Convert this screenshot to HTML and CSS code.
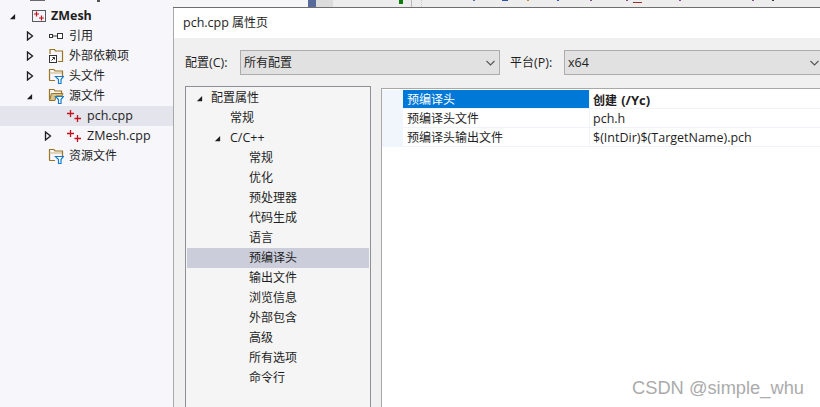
FILE: index.html
```html
<!DOCTYPE html>
<html lang="zh">
<head>
<meta charset="utf-8">
<title>pch.cpp 属性页</title>
<link rel="stylesheet" href="styles.css">
</head>
<body>
<svg class="defs" width="0" height="0" aria-hidden="true">
  <defs>
    <symbol id="open" viewBox="0 0 8 8"><path d="M7 1V7H1Z" fill="#1e1e1e"/></symbol>
    <symbol id="closed" viewBox="0 0 8 10"><path d="M1.500 1V9L6.500 5Z" fill="none" stroke="#1e1e1e" stroke-width="1.300"/></symbol>
    <symbol id="cpp" viewBox="0 0 16 16"><path d="M1 5.500H8M4.500 2V9M8.500 10.500H15M11.500 7V14" stroke="#c4101c" stroke-width="1.300" fill="none"/></symbol>
    <symbol id="filter" viewBox="0 0 16 16"><path d="M1.500 12.500V1.500H6L7 3H14.500V8M1.500 12.500H7" fill="none" stroke="#9a7420" stroke-width="1.200"/><path d="M1.500 5H14" fill="none" stroke="#c9b27a"/><path d="M7.500 8.500H15.500L13 11.500V15.500H10.500V11.500Z" fill="#fff" stroke="#1a7bc8" stroke-width="1.200"/></symbol>
    <symbol id="filter-open" viewBox="0 0 16 16"><path d="M1.500 12.500V1.500H6L7 3H13.500V5" fill="none" stroke="#9a7420" stroke-width="1.200"/><path d="M1.500 12.500L3.500 5.500H15L14 8H8L7 12.500Z" fill="#d9c48e" stroke="#9a7420"/><path d="M7.500 8.500H15.500L13 11.500V15.500H10.500V11.500Z" fill="#fff" stroke="#1a7bc8" stroke-width="1.200"/></symbol>
  </defs>
</svg>
<div class="page">
  <aside class="sidebar">
    <div class="sliver"><span class="sliver-icon"></span><span class="sliver-mark"></span></div>
    <div class="row d0">
      <span class="arrow"><svg width="7" height="7"><use href="#open"/></svg></span>
      <svg class="icon root-icon" width="16" height="16" viewBox="0 0 16 16"><rect x="1.500" y="2.500" width="13" height="11" fill="#f4f4f8" stroke="#5a5a5a"/><path d="M3 6H8M5.500 3.500V8.500M8 10H13M10.500 7.500V12.500" stroke="#c4101c" stroke-width="1.200" fill="none"/></svg>
      <span class="label strong">ZMesh</span>
    </div>
    <div class="row d1">
      <span class="arrow"><svg class="tri" width="8" height="10"><use href="#closed"/></svg></span>
      <svg class="icon" width="16" height="16" viewBox="0 0 16 16"><path d="M5 8H9.500" stroke="#333"/><rect x="1.500" y="6.500" width="3" height="3" fill="#fff" stroke="#333"/><rect x="9.500" y="5.500" width="5" height="5" fill="#fff" stroke="#333"/></svg>
      <span class="label">引用</span>
    </div>
    <div class="row d1">
      <span class="arrow"><svg class="tri" width="8" height="10"><use href="#closed"/></svg></span>
      <svg class="icon" width="16" height="16" viewBox="0 0 16 16"><path d="M2 6V1.500H6.500L7.500 3H14.500V13.500H10" fill="none" stroke="#9a7420" stroke-width="1.200"/><rect x="1.500" y="7.500" width="7" height="7" fill="#fff" stroke="#333"/><path d="M3.500 12.500L6.500 9.500M4.500 9.500H6.500V11.500" fill="none" stroke="#333"/></svg>
      <span class="label">外部依赖项</span>
    </div>
    <div class="row d1">
      <span class="arrow"><svg class="tri" width="8" height="10"><use href="#closed"/></svg></span>
      <svg class="icon" width="16" height="16"><use href="#filter"/></svg>
      <span class="label">头文件</span>
    </div>
    <div class="row d1">
      <span class="arrow"><svg width="7" height="7"><use href="#open"/></svg></span>
      <svg class="icon" width="16" height="16"><use href="#filter-open"/></svg>
      <span class="label">源文件</span>
    </div>
    <div class="row d2 selected">
      <span class="arrow"></span>
      <svg class="icon" width="16" height="16"><use href="#cpp"/></svg>
      <span class="label latin">pch.cpp</span>
    </div>
    <div class="row d2">
      <span class="arrow"><svg class="tri" width="8" height="10"><use href="#closed"/></svg></span>
      <svg class="icon" width="16" height="16"><use href="#cpp"/></svg>
      <span class="label latin">ZMesh.cpp</span>
    </div>
    <div class="row d1">
      <span class="arrow"></span>
      <svg class="icon" width="16" height="16"><use href="#filter"/></svg>
      <span class="label">资源文件</span>
    </div>
  </aside>
  <main class="main">
    <div class="strip">
      <span class="strip-blank"></span>
      <span class="strip-blue"></span>
      <span class="strip-grey"></span>
      <span class="strip-green"></span>
      <span class="strip-gutter"></span>
      <span class="strip-code">
        <i class="tick t1"></i><i class="tick t2"></i><i class="tick t3"></i><i class="tick t4"></i><i class="tick t5"></i><i class="tick t6"></i><i class="tick t7"></i><i class="tick t8"></i><i class="tick t9"></i><i class="tick t10"></i>
      </span>
    </div>
    <section class="dialog">
      <header class="titlebar"><span class="latin">pch.cpp</span> 属性页</header>
      <div class="dialog-body">
        <div class="toolbar">
          <span class="field-label">配置<span class="latin">(C):</span></span>
          <div class="select select-config"><span>所有配置</span><svg width="9" height="6" viewBox="0 0 9 6"><path d="M.5 1L4.500 5L8.500 1" fill="none" stroke="#555" stroke-width="1.100"/></svg></div>
          <span class="field-label platform">平台<span class="latin">(P):</span></span>
          <div class="select select-platform"><span class="latin">x64</span><svg width="9" height="6" viewBox="0 0 9 6"><path d="M.5 1L4.500 5L8.500 1" fill="none" stroke="#555" stroke-width="1.100"/></svg></div>
        </div>
        <div class="panels">
          <nav class="tree">
            <div class="node n0"><svg width="7" height="7"><use href="#open"/></svg><span>配置属性</span></div>
            <div class="node n1"><span>常规</span></div>
            <div class="node n1b"><svg width="7" height="7"><use href="#open"/></svg><span class="latin">C/C++</span></div>
            <div class="node n2"><span>常规</span></div>
            <div class="node n2"><span>优化</span></div>
            <div class="node n2"><span>预处理器</span></div>
            <div class="node n2"><span>代码生成</span></div>
            <div class="node n2"><span>语言</span></div>
            <div class="node n2 active"><span>预编译头</span></div>
            <div class="node n2"><span>输出文件</span></div>
            <div class="node n2"><span>浏览信息</span></div>
            <div class="node n2"><span>外部包含</span></div>
            <div class="node n2"><span>高级</span></div>
            <div class="node n2"><span>所有选项</span></div>
            <div class="node n2"><span>命令行</span></div>
          </nav>
          <div class="grid">
            <div class="prop"><span class="name picked">预编译头</span><span class="value bold">创建 <span class="latin">(/Yc)</span></span></div>
            <div class="prop"><span class="name">预编译头文件</span><span class="value latin">pch.h</span></div>
            <div class="prop"><span class="name">预编译头输出文件</span><span class="value latin">$(IntDir)$(TargetName).pch</span></div>
          </div>
        </div>
      </div>
    </section>
  </main>
</div>
<div class="watermark">CSDN @simple_whu</div>
</body>
</html>
```

FILE: styles.css
```css
* { box-sizing: border-box; }
html, body { margin: 0; height: 100%; overflow: hidden; }
body {
  position: relative;
  width: 820px;
  height: 407px;
  font: 12px/20px "Open Sans", "Noto Sans CJK SC", sans-serif;
  color: #1e1e1e;
  background: #f6f6fb;
}
.defs { position: absolute; }
.latin { font-size: 12.500px; }
.page { display: flex; width: 860px; height: 407px; }
.sidebar { width: 173px; flex: none; }
.sliver { height: 6px; display: flex; }
.sliver-icon { width: 15px; height: 1px; margin-left: 30px; background: #6a6a6a; }
.sliver-mark { width: 3px; height: 2px; margin-left: 52px; background: #555; }
.row { display: flex; align-items: center; height: 20px; white-space: nowrap; }
.row.selected { background: #e4e4ec; }
.d0 { padding-left: 9px; }
.d1 { padding-left: 26px; }
.d2 { padding-left: 44px; }
.arrow { width: 22px; flex: none; display: flex; align-items: center; }
.icon { flex: none; margin-right: 5px; }
.root-icon { margin-right: 4px; }
.strong { font-size: 12.500px; font-weight: 700; }
.main { flex: 1; display: flex; flex-direction: column; min-width: 0; }
.strip { height: 8px; display: flex; flex: none; border-bottom: 1px solid #6e6e6e; background: #ededed; }
.strip-blank { width: 135px; background: #f6f6f8; }
.strip-blue { width: 8px; background: #566a9c; }
.strip-grey { width: 17px; background: #dcdcdc; }
.strip-green { width: 4px; height: 4px; margin-left: 66px; background: #107c10; }
.strip-gutter { width: 11px; margin-left: 8px; border-left: 1px solid #b8b8b8; border-right: 1px dotted #c8c8c8; }
.strip-code { flex: 1; display: flex; align-items: flex-start; }
.tick { display: block; width: 2px; height: 1px; }
.t1 { margin-left: 51px; background: #4a6fb0; }
.t2 { margin-left: 27px; width: 6px; background: #3050b0; }
.t3 { margin-left: 19px; background: #d08a30; }
.t4 { margin-left: 28px; background: #2a60b0; }
.t5 { margin-left: 31px; background: #8a4f8a; }
.t6 { margin-left: 34px; background: #8a4f8a; }
.t7 { margin-left: 5px; width: 9px; margin-top: 2px; background: #a03030; }
.t8 { margin-left: 37px; background: #8a4f8a; }
.t9 { margin-left: 71px; background: #8a4f8a; }
.t10 { margin-left: 18px; background: #333; }
.dialog { flex: 1; display: flex; flex-direction: column; border-left: 1px solid #a8a8a8; background: #f0f0f0; }
.titlebar { height: 30px; flex: none; padding-left: 9px; background: #fff; line-height: 30px; }
.dialog-body { flex: 1; display: flex; flex-direction: column; padding: 12px 0 0 11px; }
.toolbar { display: flex; align-items: center; height: 25px; flex: none; }
.field-label { width: 55px; flex: none; }
.platform { margin-left: 10px; width: 54px; }
.select { height: 25px; display: flex; align-items: center; justify-content: space-between; padding: 0 4px 0 3px; background: #e1e1e1; border: 1px solid #adadad; }
.select-config { width: 260px; }
.select-platform { width: 260px; flex: none; }
.panels { flex: 1; display: flex; margin-top: 11px; }
.tree { width: 186px; flex: none; border: 1px solid #8e8f94; border-bottom: 0; background: #f5f5f5; padding: 1px 1px 0; }
.node { height: 20px; display: flex; align-items: center; white-space: nowrap; }
.node svg { flex: none; margin-right: 8px; }
.n0 { padding-left: 9px; }
.n1 { padding-left: 43px; }
.n1b { padding-left: 27px; }
.n1b svg { margin-right: 9px; }
.n2 { padding-left: 62px; }
.node.active { background: #cbcdda; }
.grid { flex: 1; margin: 2px 0 0 10px; padding-top: 1px; background: #fff; border: 1px solid #a8a8a8; border-width: 1px 0 0 1px; }
.prop { display: flex; height: 19px; padding-left: 21px; background: #f1f6fc; }
.name, .value { line-height: 20px; background: #fff; border-bottom: 1px solid #f0f3fa; }
.name { width: 186px; flex: none; padding-left: 4px; }
.name.picked { background: #0078d7; color: #fff; border-bottom: 0; height: 18px; }
.value { flex: 1; padding-left: 3px; border-left: 1px solid #f0f3fa; }
.bold { font-weight: 700; }
.bold .latin { font-size: 13px; margin-left: 1px; }
.watermark {
  position: absolute;
  left: 632px;
  top: 378px;
  font: 18.300px/20px "Liberation Sans", sans-serif;
  color: #ababab;
  white-space: nowrap;
}
```
